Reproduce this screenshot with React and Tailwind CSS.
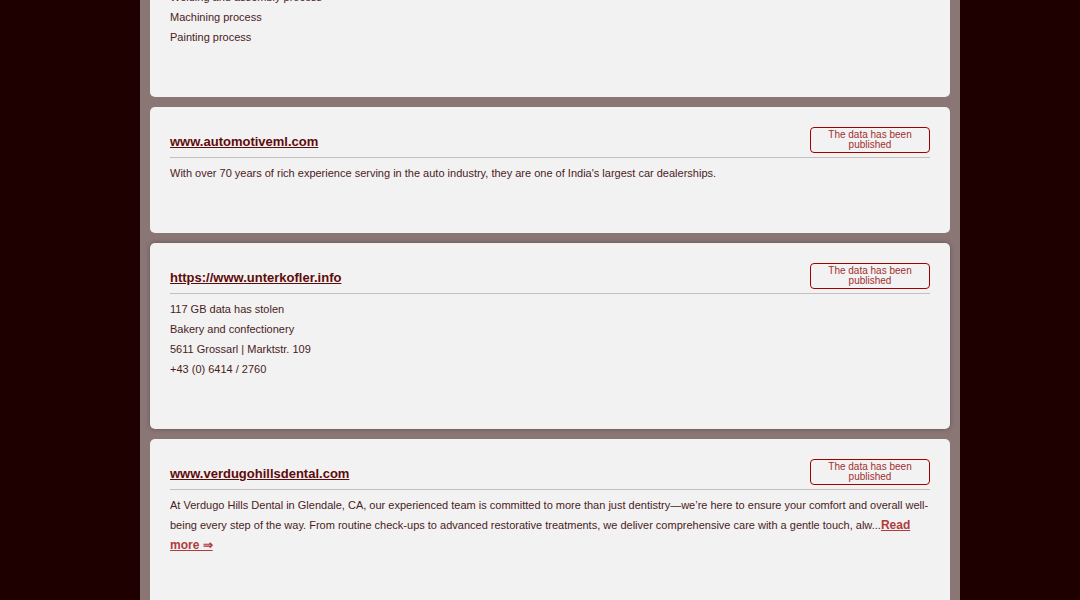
export default function App() {
  const font = { fontFamily: '"Liberation Sans", Arial, sans-serif' };
  const Badge = () => (
    <div className="w-[120px] h-[26px] border border-[#a00000] rounded-[4px] flex flex-col items-center justify-center text-[10px] leading-[10px] text-[#a32f2f] text-center pb-[1px]">
      <span>The data has been</span>
      <span>published</span>
    </div>
  );
  const Card = ({ title, children, shadow }) => (
    <div className={"bg-[#f2f2f2] rounded-[5px] px-5 pt-5 pb-[50px] " + (shadow ? "shadow-[0_0_5px_rgba(0,0,0,0.3)]" : "")}>
      <div className="flex items-center justify-between pb-[4px] border-b border-[#c4c0c0]">
        <a className="text-[13px] font-bold text-[#5e0b0b] underline leading-[16px] pt-[4px]">{title}</a>
        <Badge />
      </div>
      <div className="mt-[5px] text-[11px] leading-[20px] text-[#4a1c1c]">{children}</div>
    </div>
  );
  return (
    <div className="w-[1080px] h-[600px] overflow-hidden bg-[#1e0000] flex pl-[140px]" style={font}>
      <div className="w-[820px] bg-[#8b7676] px-[10px] flex flex-col gap-[10px] -mt-[33px]">
        <div className="bg-[#f2f2f2] rounded-[5px] px-5 pt-5 pb-[50px]">
          <div className="text-[11px] leading-[20px] text-[#4a1c1c]">
            <div>Welding and assembly process</div>
            <div>Machining process</div>
            <div>Painting process</div>
          </div>
        </div>
        <Card title="www.automotiveml.com">
          <div>With over 70 years of rich experience serving in the auto industry, they are one of India's largest car dealerships.</div>
        </Card>
        <Card title="https://www.unterkofler.info" shadow>
          <div>117 GB data has stolen</div>
          <div>Bakery and confectionery</div>
          <div>5611 Grossarl | Marktstr. 109</div>
          <div>+43 (0) 6414 / 2760</div>
        </Card>
        <Card title="www.verdugohillsdental.com">
          <div>
            At Verdugo Hills Dental in Glendale, CA, our experienced team is committed to more than just dentistry—we’re here to ensure your comfort and overall well-being every step of the way. From routine check-ups to advanced restorative treatments, we deliver comprehensive care with a gentle touch, alw...<a className="text-[12px] font-bold underline text-[#b03c3c]">Read more ⇒</a>
          </div>
        </Card>
      </div>
    </div>
  );
}
